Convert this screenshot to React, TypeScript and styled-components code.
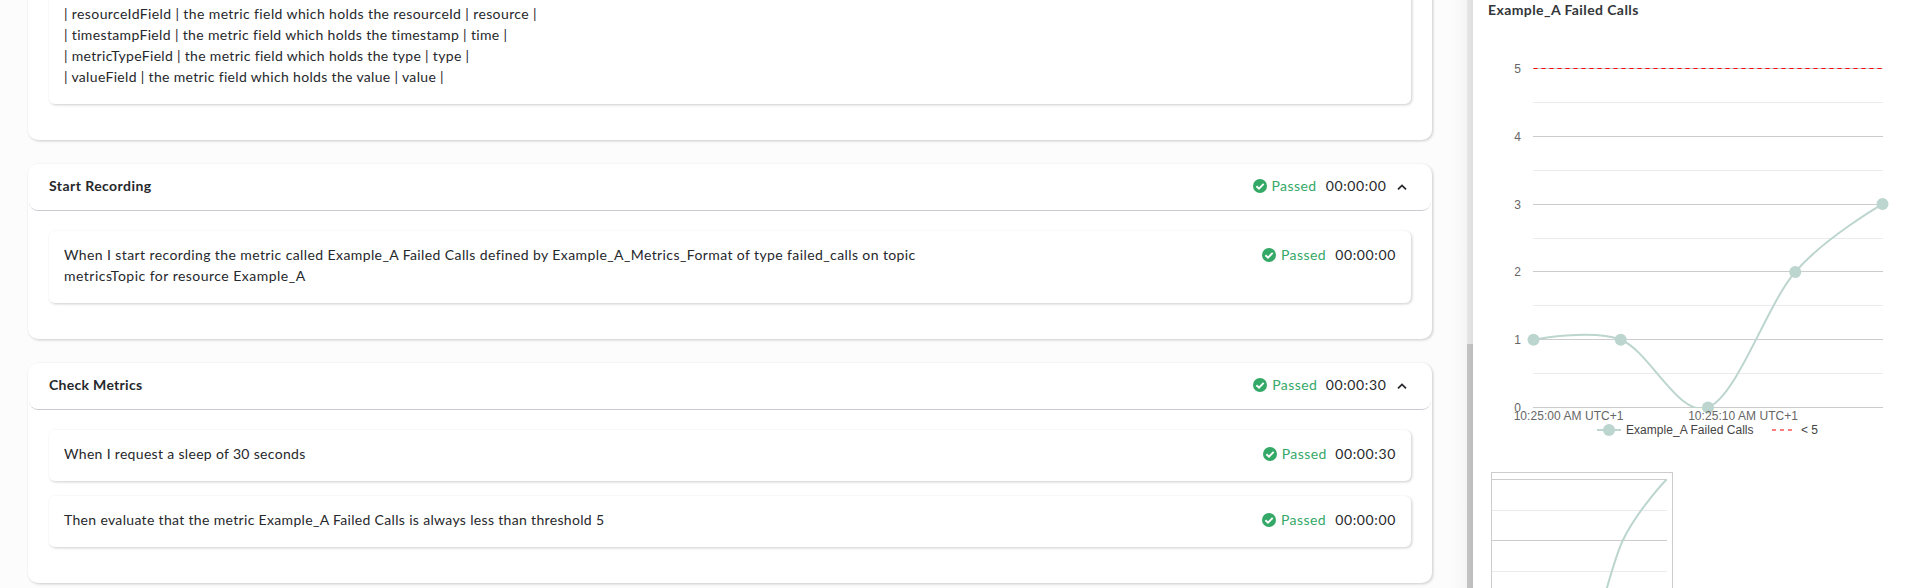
import React from "react";
import styled, { createGlobalStyle } from "styled-components";

const GlobalStyle = createGlobalStyle`
  html, body { margin: 0; padding: 0; overflow: hidden; background: #fff; }
  * { box-sizing: border-box; }
`;

const Page = styled.div`
  display: flex;
  width: 1908px;
  height: 588px;
  overflow: hidden;
  font-family: Lato, "Liberation Sans", sans-serif;
  font-size: 14px;
  line-height: 21px;
  color: #26282c;
`;

const Results = styled.main`
  display: flex;
  flex-direction: column;
  justify-content: flex-end;
  gap: 24px;
  width: 1467px;
  padding: 0 35px 5px 28px;
  background: linear-gradient(to right, #fcfcfc 1449px, #f9f9f9 1459px, #f4f4f4 1467px);
`;

const ScrollTrack = styled.div`
  display: flex;
  align-items: flex-end;
  width: 6px;
  background: linear-gradient(to right, #e6e6e6, #dedede);
`;

const ScrollThumb = styled.div`
  width: 6px;
  height: 244px;
  background: linear-gradient(to right, #c3c3c3, #bdbdbd);
`;

const ScenarioCard = styled.section`
  flex: none;
  padding-bottom: 36px;
  border-radius: 10px;
  background: #fff;
  box-shadow: 1px 1px 3px rgba(0, 0, 0, 0.2);
`;

const ScenarioHeader = styled.header`
  display: flex;
  align-items: flex-start;
  justify-content: space-between;
  height: 47px;
  margin: 0 1px;
  padding: 11px 24.5px 0 20px;
  border-bottom: 1px solid #c8cbd0;
  border-radius: 9px;
`;

const StepList = styled.div`
  display: flex;
  flex-direction: column;
  gap: 15px;
  padding: 20px 21px 0;
`;

const StepCard = styled.article`
  display: flex;
  justify-content: space-between;
  padding: 13px 15px 17px;
  border-radius: 6px;
  background: #fff;
  box-shadow: 1px 1px 3px rgba(0, 0, 0, 0.2);
`;

const Line = styled.div<{ $spacing: number; $bold?: boolean }>`
  white-space: nowrap;
  font-weight: ${(p) => (p.$bold ? 700 : 400)};
  letter-spacing: ${(p) => p.$spacing}px;
`;

const StatusGroup = styled.div<{ $short?: boolean }>`
  display: flex;
  align-items: flex-start;
  width: ${(p) => (p.$short ? 133.3 : 134)}px;
  white-space: nowrap;
`;

const StatusLabel = styled.span`
  width: 54.5px;
  margin-left: 5px;
  color: #34a867;
  letter-spacing: 0.42px;
`;

const Duration = styled.span`
  flex: 1;
  letter-spacing: 0.63px;
`;

const HeaderStatus = styled.div`
  display: flex;
  align-items: flex-start;
  gap: 10px;
`;

const Icon = styled.svg`
  flex: none;
  display: block;
  margin-top: 4px;
`;

const Metrics = styled.aside`
  width: 435px;
  background: #fff;
`;

const ChartTitle = styled.h2`
  margin: 0;
  padding: 0 0 0 15px;
  height: 21px;
  font-size: 14px;
  line-height: 19px;
  letter-spacing: 0.41px;
  color: #333639;
`;

const Chart = styled.svg`
  display: block;
  font-family: "Liberation Sans", sans-serif;
  font-size: 12px;
`;

function CheckIcon() {
  return (
    <Icon width="14" height="14" viewBox="0 0 14 14">
      <circle cx="7" cy="7" r="7" fill="#34a867" />
      <path d="M3.4 7.2 6 9.6 10.7 4.9" fill="none" stroke="#fff" strokeWidth="1.9" />
    </Icon>
  );
}

function ChevronUp() {
  return (
    <Icon width="10" height="14" viewBox="0 0 10 14">
      <path d="M1 10.3 5 6.4 9 10.3" fill="none" stroke="#26282c" strokeWidth="1.8" />
    </Icon>
  );
}

function Status({ time }: { time: string }) {
  return (
    <StatusGroup $short={time.endsWith("30")}>
      <CheckIcon />
      <StatusLabel>Passed</StatusLabel>
      <Duration>{time}</Duration>
    </StatusGroup>
  );
}

type TextLine = { text: string; spacing: number };
type Step = { lines: TextLine[]; time?: string };
type ScenarioData = { title?: TextLine; time?: string; steps: Step[] };

const scenarios: ScenarioData[] = [
  {
    steps: [
      {
        lines: [
          { text: "| resourceIdField | the metric field which holds the resourceId | resource |", spacing: 0.39 },
          { text: "| timestampField | the metric field which holds the timestamp | time |", spacing: 0.35 },
          { text: "| metricTypeField | the metric field which holds the type | type |", spacing: 0.32 },
          { text: "| valueField | the metric field which holds the value | value |", spacing: 0.335 },
        ],
      },
    ],
  },
  {
    title: { text: "Start Recording", spacing: 0.44 },
    time: "00:00:00",
    steps: [
      {
        lines: [
          {
            text: "When I start recording the metric called Example_A Failed Calls defined by Example_A_Metrics_Format of type failed_calls on topic",
            spacing: 0.4,
          },
          { text: "metricsTopic for resource Example_A", spacing: 0.48 },
        ],
        time: "00:00:00",
      },
    ],
  },
  {
    title: { text: "Check Metrics", spacing: 0.3 },
    time: "00:00:30",
    steps: [
      { lines: [{ text: "When I request a sleep of 30 seconds", spacing: 0.32 }], time: "00:00:30" },
      {
        lines: [
          { text: "Then evaluate that the metric Example_A Failed Calls is always less than threshold 5", spacing: 0.33 },
        ],
        time: "00:00:00",
      },
    ],
  },
];

function Scenario({ title, time, steps }: ScenarioData) {
  return (
    <ScenarioCard>
      {title && time && (
        <ScenarioHeader>
          <Line $bold $spacing={title.spacing}>{title.text}</Line>
          <HeaderStatus>
            <Status time={time} />
            <ChevronUp />
          </HeaderStatus>
        </ScenarioHeader>
      )}
      <StepList>
        {steps.map((step, i) => (
          <StepCard key={i}>
            <div>
              {step.lines.map((line) => (
                <Line key={line.text} $spacing={line.spacing}>{line.text}</Line>
              ))}
            </div>
            {step.time && <Status time={step.time} />}
          </StepCard>
        ))}
      </StepList>
    </ScenarioCard>
  );
}

type Point = [number, number];

function smoothPath(points: Point[]) {
  let d = `M${points[0][0]} ${points[0][1]}`;
  for (let i = 0; i < points.length - 1; i++) {
    const a = points[i];
    const b = points[i + 1];
    const before = points[i - 1];
    const after = points[i + 2];
    const c1 = before ? [a[0] + (b[0] - before[0]) / 6, a[1] + (b[1] - before[1]) / 6] : a;
    const c2 = after ? [b[0] - (after[0] - a[0]) / 6, b[1] - (after[1] - a[1]) / 6] : b;
    d += `C${c1[0]} ${c1[1]} ${c2[0]} ${c2[1]} ${b[0]} ${b[1]}`;
  }
  return d;
}

const SERIES = "#bcd5cf";
const values = [1, 1, 0, 2, 3];
const mainPoints: Point[] = values.map((v, i) => [60.5 + i * 87.25, 386.5 - v * 67.8]);
const rangePoints: Point[] = values.map((v, i) => [18.5 + i * 43.75, 641.5 - v * 61]);
const majorLines = [47, 115, 183, 250, 318, 386];
const minorLines = [81, 149, 217, 284, 352];

function MetricChart() {
  return (
    <Chart width="435" height="567" viewBox="0 0 435 567">
      <defs>
        <clipPath id="plot">
          <rect x="60" y="47" width="350" height="340" />
        </clipPath>
      </defs>
      {minorLines.map((y) => (
        <rect key={y} x="60" y={y} width="350" height="1" fill="#ebebeb" />
      ))}
      {majorLines.map((y) => (
        <rect key={y} x="60" y={y} width="350" height="1" fill="#ccc" />
      ))}
      <path d="M60.5 47.5H409.5" stroke="#f00" strokeWidth="1" strokeDasharray="4 4" />
      <path d={smoothPath(mainPoints)} fill="none" stroke={SERIES} strokeWidth="2" clipPath="url(#plot)" />
      {mainPoints.map(([x, y]) => (
        <circle key={x} cx={x} cy={y} r="6" fill={SERIES} />
      ))}
      <g fill="#666" textAnchor="end">
        {majorLines.map((y, i) => (
          <text key={y} x="48" y={y + 5}>{5 - i}</text>
        ))}
      </g>
      <g fill="#666" textAnchor="middle" letterSpacing="0.05">
        <text x="95.6" y="399">10:25:00 AM UTC+1</text>
        <text x="270.1" y="399">10:25:10 AM UTC+1</text>
      </g>
      <path d="M124 409H148" stroke={SERIES} strokeWidth="2" />
      <circle cx="136" cy="409" r="6" fill={SERIES} />
      <text x="153" y="413" fill="#444" letterSpacing="0.04">Example_A Failed Calls</text>
      <path d="M299 409H321" stroke="#ff7f7f" strokeWidth="2" strokeDasharray="4 4" />
      <text x="328" y="413" fill="#444">&lt; 5</text>

      <rect x="18.5" y="451.5" width="181" height="200" fill="none" stroke="#ccc" />
      {[489, 550].map((y) => (
        <rect key={y} x="19" y={y} width="175" height="1" fill="#ebebeb" />
      ))}
      {[458, 519].map((y) => (
        <rect key={y} x="19" y={y} width="175" height="1" fill="#ccc" />
      ))}
      <path d={smoothPath(rangePoints)} fill="none" stroke={SERIES} strokeWidth="2" />
    </Chart>
  );
}

export default function App() {
  return (
    <Page>
      <GlobalStyle />
      <Results>
        {scenarios.map((s, i) => (
          <Scenario key={i} {...s} />
        ))}
      </Results>
      <ScrollTrack>
        <ScrollThumb />
      </ScrollTrack>
      <Metrics>
        <ChartTitle>Example_A Failed Calls</ChartTitle>
        <MetricChart />
      </Metrics>
    </Page>
  );
}
